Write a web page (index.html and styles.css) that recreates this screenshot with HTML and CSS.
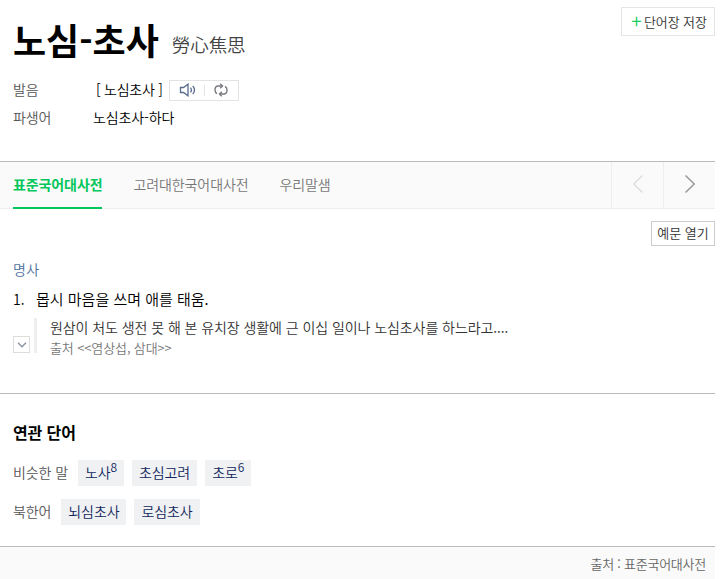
FILE: index.html
```html
<!DOCTYPE html>
<html lang="ko">
<head>
    <meta charset="UTF-8">
    <meta name="viewport" content="width=device-width, initial-scale=1.0">
    <title>노심초사</title>
    <link rel="stylesheet" href="styles.css">
</head>
<body>
    <div class="container">
        <header class="entry">
            <div class="entry-top">
                <h1 class="word">노심-초사</h1>
                <span class="hanja">勞心焦思</span>
                <button class="save-button"><span class="plus">+</span><span class="save-label">단어장 저장</span></button>
            </div>
            <dl class="info">
                <div class="info-row">
                    <dt>발음</dt>
                    <dd class="pron">
                        <span class="pron-text">[ 노심초사 ]</span>
                        <span class="player">
                            <svg width="18" height="14" viewBox="0 0 18 14" fill="none" stroke="#596b8c" stroke-width="1.3">
                                <path d="M1.5 4.5H4.5L9 1.2V12.8L4.5 9.5H1.5Z"/>
                                <path d="M11.5 4.6Q13.2 7 11.5 9.4M13.8 2.8Q17.2 7 13.8 11.2"/>
                            </svg>
                            <i class="bar"></i>
                            <svg width="14" height="14" viewBox="0 0 14 14" fill="none" stroke="#77797e" stroke-width="1.4">
                                <path d="M8 3H4.2Q1 3 1 7Q1 9.5 3 10.6M6 11H9.8Q13 11 13 7Q13 4.5 11 3.4"/>
                                <path d="M6.2 .8L8.5 3L6.2 5.2M7.8 8.8L5.5 11L7.8 13.2"/>
                            </svg>
                        </span>
                    </dd>
                </div>
                <div class="info-row">
                    <dt>파생어</dt>
                    <dd class="derived">노심초사-하다</dd>
                </div>
            </dl>
        </header>

        <nav class="tabs">
            <a class="tab active">표준국어대사전</a>
            <a class="tab">고려대한국어대사전</a>
            <a class="tab">우리말샘</a>
            <div class="arrows">
                <button class="arrow" aria-label="이전">
                    <svg width="12" height="20" viewBox="0 0 12 20" fill="none" stroke="#dedede" stroke-width="1.5"><path d="M10.5 1.5L1.8 10L10.5 18.5"/></svg>
                </button>
                <button class="arrow" aria-label="다음">
                    <svg width="12" height="20" viewBox="0 0 12 20" fill="none" stroke="#999" stroke-width="1.5"><path d="M1.5 1.5L10.2 10L1.5 18.5"/></svg>
                </button>
            </div>
        </nav>

        <main class="meaning">
            <button class="example-button">예문 열기</button>
            <h2 class="part">명사</h2>
            <p class="definition"><span class="num">1.</span><span class="definition-text">몹시 마음을 쓰며 애를 태움.</span></p>
            <div class="example">
                <button class="fold" aria-label="펼치기">
                    <svg width="10" height="6" viewBox="0 0 10 6" fill="none" stroke="#8b95a5" stroke-width="1.5"><path d="M1 .8L5 4.8L9 .8"/></svg>
                </button>
                <div class="quote">
                    <p class="sentence">원삼이 처도 생전 못 해 본 유치장 생활에 근 이십 일이나 노심초사를 하느라고....</p>
                    <p class="source">출처 &lt;&lt;염상섭, 삼대&gt;&gt;</p>
                </div>
            </div>
        </main>

        <section class="related">
            <h2 class="related-title">연관 단어</h2>
            <div class="related-row">
                <span class="related-label">비슷한 말</span>
                <a class="chip">노사<sup>8</sup></a>
                <a class="chip">초심고려</a>
                <a class="chip">초로<sup>6</sup></a>
            </div>
            <div class="related-row">
                <span class="related-label">북한어</span>
                <a class="chip">뇌심초사</a>
                <a class="chip">로심초사</a>
            </div>
        </section>

        <footer class="footer">출처 : 표준국어대사전</footer>
    </div>
</body>
</html>
```
FILE: styles.css
```css
* {
    box-sizing: border-box;
}

body {
    margin: 0;
    background: #fff;
    color: #000;
    font-family: "Noto Sans CJK KR", sans-serif;
    font-size: 14px;
    font-weight: 350;
    line-height: 20px;
    letter-spacing: -0.1px;
}

h1, h2, p, dl, dd {
    margin: 0;
}

button {
    padding: 0;
    border: 0;
    background: #fff;
    color: #333;
    font-family: inherit;
    font-weight: inherit;
}

svg {
    display: block;
}

.container {
    width: 715px;
    height: 579px;
    overflow: hidden;
    white-space: nowrap;
}

/* 표제어 */
.entry {
    height: 161px;
    padding-left: 13px;
}

.entry-top {
    display: flex;
    height: 75px;
}

.word {
    padding-top: 14px;
    font-size: 36px;
    line-height: 50px;
    letter-spacing: 0;
}

.hanja {
    margin-left: 13px;
    padding-top: 30px;
    color: #444;
    font-size: 18.5px;
    line-height: 28px;
}

.save-button {
    display: flex;
    align-items: center;
    width: 94px;
    height: 29px;
    margin: 7px 0 0 auto;
    padding-left: 8px;
    border: 1px solid #e5e5e5;
    font-size: 13px;
}

.plus {
    width: 14px;
    margin-top: -4px;
    color: #19ce60;
    font-size: 19px;
    line-height: 20px;
    text-indent: -1px;
}

.save-label {
    letter-spacing: -0.1px;
}

.info-row {
    display: flex;
    align-items: center;
    height: 28px;
}

.info-row dt {
    width: 80px;
    color: #555;
}

.pron {
    display: flex;
    align-items: center;
    padding-left: 3px;
}

.pron-text {
    width: 67px;
    letter-spacing: -0.25px;
}

.player {
    display: flex;
    align-items: center;
    width: 70px;
    height: 21px;
    margin-top: 2px;
    margin-left: 6px;
    padding-left: 9px;
    border: 1px solid #e3e3e3;
}

.bar {
    width: 1px;
    height: 11px;
    margin: 0 9px 0 7px;
    background: #e5e5e5;
}

/* 사전 탭 */
.tabs {
    display: flex;
    height: 48px;
    padding-left: 13px;
    border-top: 1px solid #bbb;
    border-bottom: 1px solid #eee;
    background: #fafafa;
}

.tab {
    height: 47px;
    margin-right: 31px;
    color: #777;
    line-height: 44px;
}

.tab.active {
    border-bottom: 2px solid #03c75a;
    color: #03c75a;
    font-weight: bold;
}

.arrows {
    display: flex;
    margin-left: auto;
}

.arrow {
    display: flex;
    align-items: center;
    justify-content: center;
    width: 52px;
    padding-bottom: 2px;
    border-left: 1px solid #eee;
    background: #fafafa;
}

/* 뜻풀이 */
.meaning {
    height: 184px;
    padding: 12px 0 0 13px;
}

.example-button {
    display: block;
    width: 64px;
    height: 25px;
    margin-left: auto;
    padding-bottom: 2px;
    border: 1px solid #ccc;
    font-size: 13px;
}

.part {
    margin-top: 13px;
    color: #4f6f9c;
    font-size: 14px;
    font-weight: 350;
    letter-spacing: 0.3px;
}

.definition {
    display: flex;
    margin-top: 10px;
    font-size: 15px;
    letter-spacing: 0;
}

.num {
    width: 23px;
    font-size: 14px;
}

.example {
    display: flex;
    align-items: flex-end;
    margin-top: 9px;
}

.fold {
    display: flex;
    align-items: center;
    justify-content: center;
    width: 17px;
    height: 17px;
    border: 1px solid #ddd;
}

.quote {
    height: 35px;
    margin-left: 4px;
    padding-left: 13px;
    border-left: 3px solid #eee;
}

.sentence {
    margin-top: -1px;
    color: #333;
    font-size: 14px;
    letter-spacing: -0.07px;
}

.source {
    color: #777;
    font-size: 13px;
    line-height: 22px;
}

/* 연관 단어 */
.related {
    height: 153px;
    padding: 28px 0 0 13px;
    border-top: 1px solid #bbb;
}

.related-title {
    margin-bottom: 18px;
    font-size: 16px;
    line-height: 20px;
}

.related-row {
    display: flex;
    gap: 8px;
    height: 26px;
    margin-bottom: 13px;
    line-height: 24px;
}

.related-label {
    margin-right: 2px;
    color: #555;
}

.chip {
    padding: 0 7px;
    background: #f0f1f3;
    color: #10275c;
}

.chip sup {
    font-size: 12px;
    line-height: 0;
}

.footer {
    height: 33px;
    padding-right: 9px;
    border-top: 1px solid #bbb;
    background: #fafafa;
    color: #666;
    font-size: 13px;
    line-height: 34px;
    letter-spacing: -0.25px;
    text-align: right;
}
```
